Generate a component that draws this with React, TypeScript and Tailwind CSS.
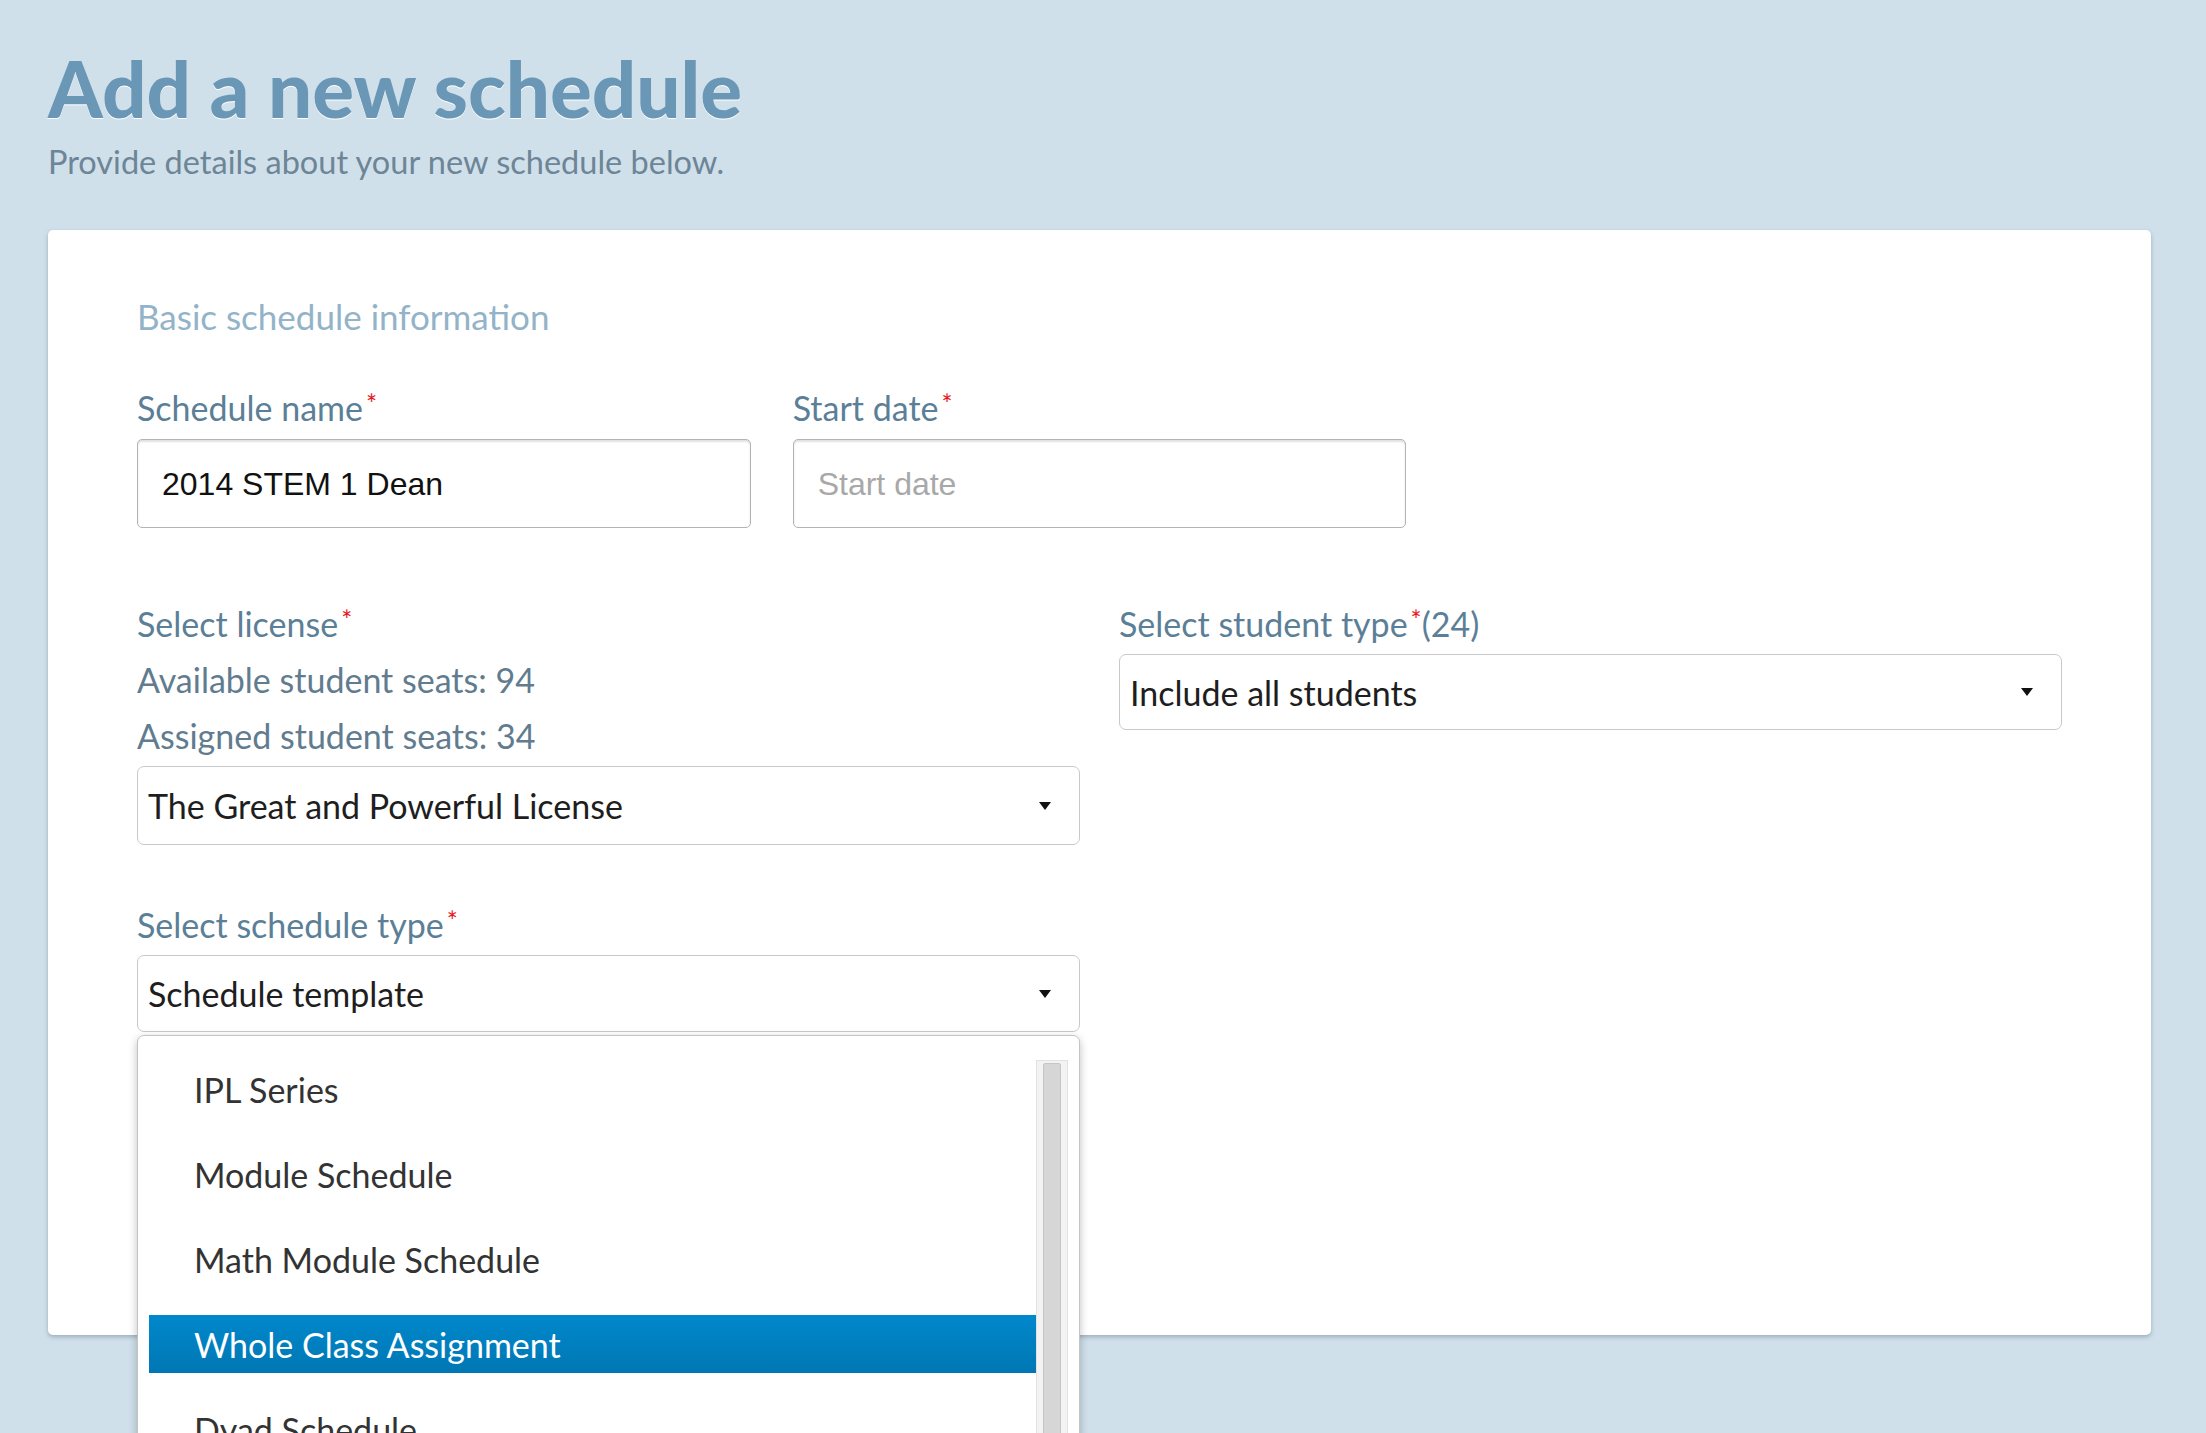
import React from 'react';

const templates = [
  'IPL Series',
  'Module Schedule',
  'Math Module Schedule',
  'Whole Class Assignment',
  'Dyad Schedule',
];

function Req() {
  return <span className="relative -top-[7px] ml-[3px] text-[26px] leading-none text-[#e8141b]">*</span>;
}

function Caret() {
  return (
    <svg width="12" height="8" viewBox="0 0 12 8" className="shrink-0">
      <path d="M0 0h12L6 8z" fill="#111" />
    </svg>
  );
}

function SelectBox({ value, height }: { value: string; height: string }) {
  return (
    <div
      className={`mt-[2px] flex ${height} items-center justify-between rounded-[7px] border border-[#c9c9c9] bg-white pl-[10px] pr-[28px] text-[34px] text-[#1e1e1e]`}
    >
      <span>{value}</span>
      <Caret />
    </div>
  );
}

export default function App() {
  return (
    <div className="h-screen overflow-hidden bg-[#cfe0ea] pl-[48px] pr-[55px] pt-[50px] font-[Lato,sans-serif]">
      <h1 className="text-[78px] font-black leading-[76px] text-[#6a97b5] [text-shadow:0_1px_0_#fff]">
        Add a new schedule
      </h1>
      <p className="mt-[21px] text-[32.5px] leading-[30px] text-[#6d8597]">
        Provide details about your new schedule below.
      </p>

      <div className="mt-[53px] h-[1105px] rounded-[5px] bg-white px-[89px] pt-[71px] shadow-[0_2px_4px_rgba(60,80,100,0.35)]">
        <h2 className="text-[35px] leading-[30px] text-[#93b3c8]">Basic schedule information</h2>

        <div className="mt-[49px] grid grid-cols-3 gap-x-[42px]">
          <div>
            <label className="block text-[34px] leading-[56px] text-[#5c7f98]">
              Schedule name
              <Req />
            </label>
            <div className="mt-[3px] flex h-[89px] items-center rounded-[5px] border border-[#b4b4b4] bg-white px-[24px] font-['Liberation_Sans',Arial,sans-serif] text-[32px] text-[#111] shadow-[inset_0_2px_2px_rgba(0,0,0,0.12)]">
              2014 STEM 1 Dean
            </div>
          </div>
          <div>
            <label className="block text-[34px] leading-[56px] text-[#5c7f98]">
              Start date
              <Req />
            </label>
            <div className="mt-[3px] flex h-[89px] items-center rounded-[5px] border border-[#b4b4b4] bg-white px-[24px] font-['Liberation_Sans',Arial,sans-serif] text-[32px] text-[#a8a8a8] shadow-[inset_0_2px_2px_rgba(0,0,0,0.12)]">
              Start date
            </div>
          </div>
        </div>

        <div className="mt-[68px] grid grid-cols-2 gap-x-[39px]">
          <div>
            <div className="text-[34px] leading-[56px] text-[#5c7f98]">
              <div>
                Select license
                <Req />
              </div>
              <div className="text-[#617c8f]">Available student seats: 94</div>
              <div className="text-[#617c8f]">Assigned student seats: 34</div>
            </div>
            <SelectBox value="The Great and Powerful License" height="h-[79px]" />

            <div className="mt-[52px] text-[34px] leading-[56px] text-[#5c7f98]">
              Select schedule type
              <Req />
            </div>
            <div className="relative">
              <SelectBox value="Schedule template" height="h-[77px]" />
              <div className="absolute left-0 right-0 top-[80px] z-10 h-[420px] rounded-t-[7px] border border-[#c4c4c4] bg-white pl-[11px] pt-[24px] shadow-[0_3px_8px_rgba(0,0,0,0.25)]">
                <div className="flex">
                  <ul className="flex-1 space-y-[27px]">
                    {templates.map((t) => (
                      <li
                        key={t}
                        className={`flex h-[58px] items-center pl-[45px] text-[34px] ${
                          t === 'Whole Class Assignment'
                            ? 'bg-gradient-to-b from-[#0088cc] to-[#0077b3] text-white'
                            : 'text-[#333]'
                        }`}
                      >
                        {t}
                      </li>
                    ))}
                  </ul>
                  <div className="mr-[11px] w-[32px] self-stretch border border-[#e2e2e2] bg-[#f3f3f3] px-[6px] pt-[2px]">
                    <div className="h-[500px] rounded-[2px] border border-[#c6c6c6] bg-[#d6d6d6]" />
                  </div>
                </div>
              </div>
            </div>
          </div>

          <div>
            <div className="text-[34px] leading-[56px] text-[#5c7f98]">
              Select student type
              <Req />
              <span>(24)</span>
            </div>
            <SelectBox value="Include all students" height="h-[76px]" />
          </div>
        </div>
      </div>
    </div>
  );
}
